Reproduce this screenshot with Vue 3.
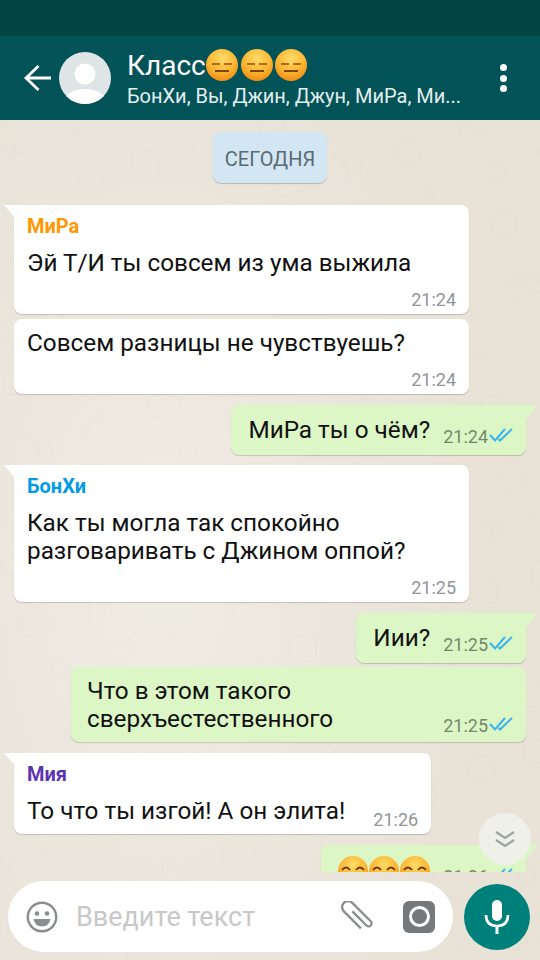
<script setup>
const messages = [
  { id: 1, side: 'in', wide: true, tail: true, sender: 'МиРа', color: '#ff9800', lines: ['Эй Т/И ты совсем из ума выжила'], time: '21:24' },
  { id: 2, side: 'in', wide: true, lines: ['Совсем разницы не чувствуешь?'], time: '21:24', next: true },
  { id: 3, side: 'out', tail: true, lines: ['МиРа ты о чём?'], time: '21:24' },
  { id: 4, side: 'in', wide: true, tail: true, sender: 'БонХи', color: '#039be5', lines: ['Как ты могла так спокойно', 'разговаривать с Джином оппой?'], time: '21:25' },
  { id: 5, side: 'out', tail: true, lines: ['Иии?'], time: '21:25' },
  { id: 6, side: 'out', wide: true, lines: ['Что в этом такого', 'сверхъестественного'], time: '21:25', next: true },
  { id: 7, side: 'in', tail: true, inline: true, sender: 'Мия', color: '#5e35b1', lines: ['То что ты изгой! А он элита!'], time: '21:26' }
];
</script>

<template>
  <div class="phone">
    <svg class="wallpaper" width="540" height="960">
      <defs>
        <radialGradient id="emojiFill" cx="50%" cy="30%" r="75%">
          <stop offset="0%" stop-color="#ffdc6a" />
          <stop offset="55%" stop-color="#fdb733" />
          <stop offset="100%" stop-color="#ee8410" />
        </radialGradient>
        <radialGradient id="wallLight" cx="30%" cy="60%" r="60%">
          <stop offset="0%" stop-color="#f1eee6" stop-opacity="0.9" />
          <stop offset="100%" stop-color="#f1eee6" stop-opacity="0" />
        </radialGradient>
        <pattern id="doodles" width="190" height="170" patternUnits="userSpaceOnUse" patternTransform="rotate(-18)">
          <g fill="none" stroke="#8d8468" stroke-opacity="0.045" stroke-width="1.200">
            <circle cx="30" cy="30" r="13" />
            <path d="M24 27h2M35 27h2M24 36q6 4 12 0" />
            <path d="M80 14l24 11-8 22-24-11z" />
            <path d="M140 26q14-16 26 0t-13 28q-24-12-13-28z" />
            <rect x="16" y="84" width="30" height="20" rx="3" />
            <path d="M16 91h30M78 80q16 9 6 30M92 80q16 9 6 30" />
            <path d="M136 96l20-13 7 27-21 6z" />
            <circle cx="40" cy="146" r="9" />
            <path d="M84 138h32l-6 19H90zM116 143h7v7h-9" />
            <path d="M150 140l12 12M162 140l-12 12" />
          </g>
        </pattern>
      </defs>
      <rect width="540" height="960" fill="url(#wallLight)" />
      <rect width="540" height="960" fill="url(#doodles)" />
    </svg>

    <div class="status-bar"></div>

    <header class="top-bar">
      <svg class="back" width="28" height="28" viewBox="0 0 28 28">
        <path d="M28 14H3M15.500 2L3 14l12.500 12" fill="none" stroke="#fff" stroke-width="2.800" />
      </svg>
      <svg class="avatar" width="52" height="52" viewBox="0 0 52 52">
        <defs>
          <clipPath id="avatarClip"><circle cx="26" cy="26" r="26" /></clipPath>
        </defs>
        <circle cx="26" cy="26" r="26" fill="#dfe5e7" />
        <g clip-path="url(#avatarClip)" fill="#fff">
          <circle cx="26" cy="22" r="10.500" />
          <ellipse cx="26" cy="50" rx="21" ry="13" />
        </g>
      </svg>
      <div class="chat-info">
        <div class="chat-title">
          <span>Класс</span>
          <svg v-for="n in 3" :key="n" class="title-emoji" width="32" height="32" viewBox="0 0 32 32">
            <circle cx="16" cy="16" r="16" fill="url(#emojiFill)" />
            <path d="M6 15h8M18 15h8" stroke="#a3480f" stroke-width="1.500" />
            <path d="M9 22h14" stroke="#6a3a10" stroke-width="1.800" />
          </svg>
        </div>
        <div class="chat-members">БонХи, Вы, Джин, Джун, МиРа, Ми...</div>
      </div>
      <div class="menu-dots"><i></i><i></i><i></i></div>
    </header>

    <main class="messages">
      <div class="date-chip">СЕГОДНЯ</div>

      <div
        v-for="m in messages"
        :key="m.id"
        class="bubble"
        :class="[m.side, { wide: m.wide, tail: m.tail, next: m.next, row: m.side === 'out' || m.inline }]"
      >
        <div v-if="m.sender" class="sender" :style="{ color: m.color }">{{ m.sender }}</div>
        <div class="body">
          <div class="text">
            <div v-for="line in m.lines" :key="line">{{ line }}</div>
          </div>
          <div class="meta">
            <span class="time">{{ m.time }}</span>
            <svg v-if="m.side === 'out'" class="ticks" width="24" height="16" viewBox="0 0 24 16">
              <path d="M1 8l5 5.500L16 2M9.500 12l1.500 1.500L23 2" fill="none" stroke="#3bb3ec" stroke-width="2" />
            </svg>
          </div>
        </div>
      </div>

      <div class="bubble out tail row last">
        <div class="body">
          <div class="text laughing">
            <svg v-for="n in 3" :key="n" width="30" height="30" viewBox="0 0 30 30">
              <circle cx="15" cy="15" r="15" fill="url(#emojiFill)" />
              <path d="M4 14q4-5 8 0M18 14q4-5 8 0" fill="none" stroke="#6a3a10" stroke-width="1.800" />
              <path d="M5 18h20q-1 9-10 9T5 18z" fill="#7a3410" />
            </svg>
          </div>
          <div class="meta">
            <span class="time">21:26</span>
            <svg class="ticks" width="24" height="16" viewBox="0 0 24 16">
              <path d="M1 8l5 5.500L16 2M9.500 12l1.500 1.500L23 2" fill="none" stroke="#3bb3ec" stroke-width="2" />
            </svg>
          </div>
        </div>
      </div>
    </main>

    <button class="scroll-down">
      <svg width="20" height="18" viewBox="0 0 20 18">
        <path d="M1 2l9 6 9-6M1 10l9 6 9-6" fill="none" stroke="#9aa5a3" stroke-width="2.200" />
      </svg>
    </button>

    <footer class="composer">
      <div class="input-pill">
        <svg width="32" height="32" viewBox="0 0 32 32">
          <circle cx="16" cy="16" r="14.200" fill="none" stroke="#8a8d90" stroke-width="2.400" />
          <circle cx="11" cy="12.500" r="2.300" fill="#8a8d90" />
          <circle cx="21" cy="12.500" r="2.300" fill="#8a8d90" />
          <path d="M7.500 18h17q-1.500 7.500-8.500 7.500T7.500 18z" fill="#8a8d90" />
        </svg>
        <input class="text-input" type="text" placeholder="Введите текст" />
        <svg class="clip" width="34" height="32" viewBox="0 0 34 32">
          <path transform="rotate(-45 17 16) translate(0 4)" d="M17 4v20a3 3 0 0 0 6 0V-2a6 6 0 0 0-12 0v24" fill="none" stroke="#8a8d90" stroke-width="2.300" />
        </svg>
        <div class="camera"><i></i></div>
      </div>
      <button class="mic">
        <svg width="28" height="36" viewBox="0 0 28 36">
          <rect x="9" y="1" width="10" height="21" rx="5" fill="#fff" />
          <path d="M3 16q0 11 11 11t11-11" fill="none" stroke="#fff" stroke-width="2.600" />
          <path d="M14 27v8" stroke="#fff" stroke-width="3" />
        </svg>
      </button>
    </footer>
  </div>
</template>

<style>
html, body {
  margin: 0;
  background: #e9e3d8;
}
</style>

<style scoped>
.phone {
  position: relative;
  width: 540px;
  height: 960px;
  display: flex;
  flex-direction: column;
  overflow: hidden;
  background: #e8e2d7;
  font-family: Roboto, "Liberation Sans", sans-serif;
}

.wallpaper {
  position: absolute;
  top: 0;
  left: 0;
}

.status-bar {
  position: relative;
  height: 36px;
  background: #024644;
  flex-shrink: 0;
}

.top-bar {
  position: relative;
  height: 84px;
  flex-shrink: 0;
  background: #025358;
  display: flex;
  align-items: center;
  padding-left: 23px;
  color: #fff;
  box-sizing: border-box;
}

.back {
  margin-right: 8px;
}

.avatar {
  margin-right: 16px;
  flex-shrink: 0;
}

.chat-info {
  width: 340px;
}

.chat-title {
  display: flex;
  align-items: center;
  font-size: 28px;
  height: 34px;
  margin-top: 1px;
  gap: 2.500px;
}

.title-emoji {
  flex-shrink: 0;
}

.chat-title span {
  margin-right: -2px;
}

.chat-members {
  font-size: 20px;
  line-height: 26px;
  margin-top: 1px;
  color: #e4eeee;
  white-space: nowrap;
}

.menu-dots {
  margin-left: 33px;
  display: flex;
  flex-direction: column;
  gap: 3.500px;
}

.menu-dots i {
  display: block;
  width: 7px;
  height: 7px;
  border-radius: 50%;
  background: #fff;
}

.messages {
  position: relative;
  flex: 1;
  min-height: 0;
  overflow: hidden;
  display: flex;
  flex-direction: column;
  padding: 12px 14px 0;
}

.date-chip {
  align-self: center;
  flex-shrink: 0;
  width: 114px;
  height: 51px;
  line-height: 55px;
  text-align: center;
  margin-bottom: 22px;
  font-size: 20px;
  color: #5a6a72;
  background: #d3e6f3;
  border-radius: 8px;
  box-shadow: 0 1px 1px rgba(0, 0, 0, 0.2);
}

.bubble {
  position: relative;
  flex-shrink: 0;
  box-sizing: border-box;
  margin-bottom: 11px;
  padding: 10px 13px 3px;
  border-radius: 8px;
  background: #fff;
  box-shadow: 0 1px 1px rgba(0, 0, 0, 0.18);
  font-size: 24.300px;
  line-height: 28px;
  color: #111;
  align-self: flex-start;
}

.bubble.wide {
  width: 455px;
}

.bubble.out {
  align-self: flex-end;
  background: #dcf7c5;
  padding: 11px 13px 11px 17px;
  margin-bottom: 10px;
}

.bubble.out.wide {
  padding: 10px 13px 9px 16px;
  margin-bottom: 11px;
}

.bubble.next {
  margin-top: -6px;
}

.bubble.row:not(.out) {
  padding-bottom: 9px;
}

.bubble.tail {
  border-top-left-radius: 0;
}

.bubble.tail.out {
  border-top-left-radius: 8px;
  border-top-right-radius: 0;
}

.bubble.tail::before {
  content: "";
  position: absolute;
  top: 0;
  width: 12px;
  height: 14px;
  background: inherit;
}

.bubble.in.tail::before {
  left: -10px;
  clip-path: polygon(0 0, 100% 0, 100% 100%);
}

.bubble.out.tail::before {
  right: -12px;
  clip-path: polygon(0 0, 100% 0, 0 100%);
}

.bubble.last {
  margin-bottom: 0;
}

.sender {
  font-size: 20px;
  line-height: 22px;
  font-weight: 700;
  margin-bottom: 12px;
}

.meta {
  display: flex;
  justify-content: flex-end;
  align-items: center;
  height: 22px;
  margin-top: 12px;
  white-space: nowrap;
}

.row .body {
  display: flex;
  align-items: flex-end;
  justify-content: space-between;
}

.row .meta {
  margin: 0 0 -4px 13px;
}

.in.row .meta {
  margin: 0 0 -6px 28px;
}

.last.row .meta {
  margin-bottom: -2px;
}

.time {
  font-size: 18px;
  line-height: 22px;
  color: #8f9598;
}

.out .time {
  color: #74896a;
}

.ticks {
  margin: -5px 0 0 1px;
}

.laughing {
  display: flex;
  gap: 1px;
}

.scroll-down {
  position: absolute;
  left: 479px;
  top: 813px;
  width: 52px;
  height: 52px;
  padding: 0;
  border: none;
  border-radius: 50%;
  background: rgba(240, 240, 235, 0.94);
  display: flex;
  align-items: center;
  justify-content: center;
}

.composer {
  position: relative;
  height: 88px;
  flex-shrink: 0;
  box-sizing: border-box;
  display: flex;
  align-items: center;
  padding: 1px 0 0 8px;
}

.input-pill {
  width: 445px;
  height: 71px;
  box-sizing: border-box;
  background: #fff;
  border-radius: 36px;
  display: flex;
  align-items: center;
  padding: 0 18px;
}

.text-input {
  flex: 1;
  min-width: 0;
  margin-left: 18px;
  padding: 0;
  border: none;
  outline: none;
  background: transparent;
  font-family: Roboto, "Liberation Sans", sans-serif;
  font-size: 27px;
}

.text-input::placeholder {
  color: #c8c8c8;
  opacity: 1;
}

.camera {
  width: 32px;
  height: 32px;
  margin-left: 28px;
  border-radius: 6px;
  background: #76797c;
  display: flex;
  align-items: center;
  justify-content: center;
}

.camera i {
  display: block;
  box-sizing: border-box;
  width: 21px;
  height: 21px;
  border: 3px solid #fff;
  border-radius: 50%;
}

.mic {
  width: 66px;
  height: 66px;
  margin-left: 11px;
  padding: 0;
  border: none;
  border-radius: 50%;
  background: #00807a;
  display: flex;
  align-items: center;
  justify-content: center;
}
</style>
